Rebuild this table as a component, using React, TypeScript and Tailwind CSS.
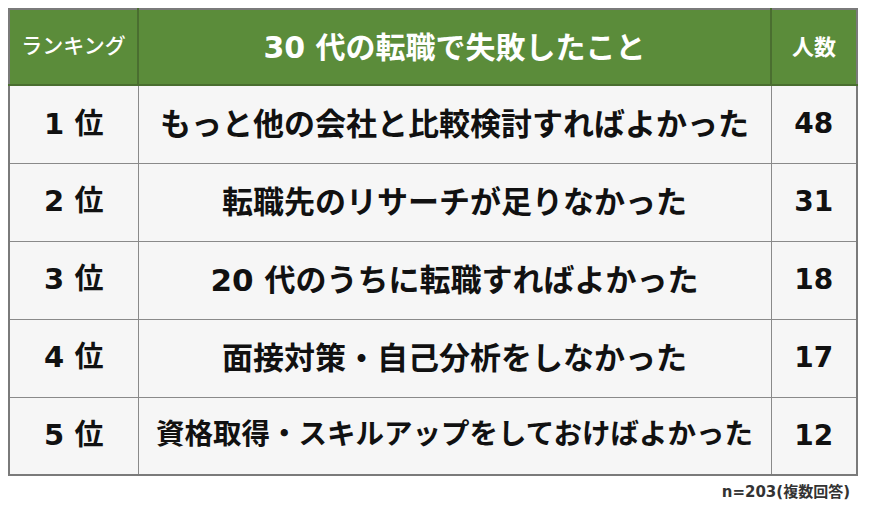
import React from 'react'

const rows = [
  { rank: '1', text: 'もっと他の会社と比較検討すればよかった', size: 'text-[31px]', count: '48' },
  { rank: '2', text: '転職先のリサーチが足りなかった', size: 'text-[31px]', count: '31' },
  { rank: '3', text: '20 代のうちに転職すればよかった', size: 'text-[31px]', count: '18' },
  { rank: '4', text: '面接対策・自己分析をしなかった', size: 'text-[31px]', count: '17' },
  { rank: '5', text: '資格取得・スキルアップをしておけばよかった', size: 'text-[28.5px]', count: '12' },
]

export default function App() {
  return (
    <div
      className="w-[870px] h-[509px] bg-white pt-2 pl-2"
      style={{ fontFamily: '"DejaVu Sans", "Noto Sans CJK JP", sans-serif' }}
    >
      <table className="w-[848px] border-collapse table-fixed border-2 border-[#7a7a7a]">
        <colgroup>
          <col className="w-[129px]" />
          <col className="w-[633px]" />
          <col className="w-[86px]" />
        </colgroup>
        <thead>
          <tr className="h-[76px] bg-[#5b8c3a] text-white">
            <th className="border-r-2 border-b-2 border-[#4a6e30] text-[21px] font-medium">ランキング</th>
            <th className="border-r-2 border-b-2 border-[#4a6e30] text-[30px] font-bold">30 代の転職で失敗したこと</th>
            <th className="border-b-2 border-[#4a6e30] text-[22px] font-bold">人数</th>
          </tr>
        </thead>
        <tbody>
          {rows.map((r) => (
            <tr key={r.rank} className="h-[78px] bg-[#f6f6f6] text-[#111]">
              <td className="border-r border-b border-[#8a8a8a] text-center text-[29px] font-bold">
                {r.rank} 位
              </td>
              <td className={`border-r border-b border-[#8a8a8a] text-center font-bold ${r.size}`}>{r.text}</td>
              <td className="border-b border-[#8a8a8a] text-center text-[28px] font-bold">{r.count}</td>
            </tr>
          ))}
        </tbody>
      </table>
      <div className="w-[842px] text-right text-[15px] font-semibold text-[#333] mt-[5px]">n=203(複数回答)</div>
    </div>
  )
}
